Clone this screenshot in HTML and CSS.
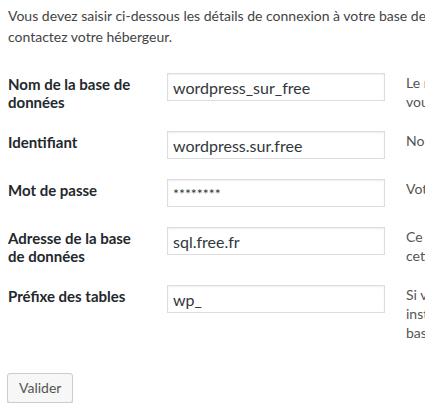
FILE: index.html
```html
<!DOCTYPE html>
<html>
<head>
  <title>Configuration de WordPress</title>
  <meta name="viewport" content="width=device-width, initial-scale=1.0">
  <link rel="stylesheet" href="styles.css">
</head>
<body>
  <div class="setup">
    <p class="intro">Vous devez saisir ci-dessous les détails de connexion à votre base de données. Si vous ne les connaissez pas,<br>contactez votre hébergeur.</p>

    <form>
      <div class="field">
        <label for="dbname">Nom de la base de données</label>
        <input id="dbname" type="text" value="wordpress_sur_free">
        <p class="desc">Le nom de la base de données avec laquelle<br>vous souhaitez utiliser WordPress.</p>
      </div>
      <div class="field">
        <label for="uname">Identifiant</label>
        <input id="uname" type="text" value="wordpress.sur.free">
        <p class="desc">Nom d’utilisateur de votre base de données.</p>
      </div>
      <div class="field">
        <label for="pwd">Mot de passe</label>
        <input id="pwd" type="text" class="secret" value="********">
        <p class="desc">Votre mot de passe de base de données.</p>
      </div>
      <div class="field">
        <label for="dbhost">Adresse de la base de données</label>
        <input id="dbhost" type="text" value="sql.free.fr">
        <p class="desc">Ce devrait être localhost. Si cela ne marche pas,<br>cette information vous est donnée par votre hébergeur.</p>
      </div>
      <div class="field last">
        <label for="prefix">Préfixe des tables</label>
        <input id="prefix" type="text" value="wp_">
        <p class="desc">Si vous souhaitez faire tourner plusieurs<br>installations de WordPress sur une même<br>base de données, modifiez ce champ.</p>
      </div>

      <button type="button" class="button">Valider</button>
    </form>
  </div>
</body>
</html>
```

FILE: styles.css
```css
html, body { margin: 0; overflow: hidden; }
body { background: #fff; color: #444; font-family: Lato, sans-serif; font-size: 14px; }
.setup { width: 700px; padding: 5px 8px 0 8px; }
.intro { margin: 0 0 26px 0; line-height: 21px; white-space: nowrap; }

.field { display: flex; align-items: flex-start; margin-bottom: 20px; }
.field.last { margin-bottom: 0; }
.field label {
  flex: none; width: 136px; margin-right: 23px; padding-top: 2px;
  font-size: 15px; font-weight: bold; color: #23282d; line-height: 18px;
}
.field input {
  flex: none; box-sizing: border-box; width: 218px; height: 28px; margin: 0; padding: 3px 5px;
  border: 1px solid #ddd; box-shadow: inset 0 1px 2px rgba(0,0,0,.07);
  font-family: inherit; font-size: 16px; color: #32373c; outline: none;
}
.field .secret { font-size: 14px; }
.desc { flex: none; margin: 0 0 0 21px; line-height: 19px; color: #555; white-space: nowrap; }

.button {
  margin: 31px 0 0 -1px; height: 30px; padding: 0 11px 2px;
  background: #f7f7f7; border: 1px solid #ccc; border-radius: 3px;
  box-shadow: 0 1px 0 #ccc; color: #555;
  font-family: inherit; font-size: 14px;
}
```
